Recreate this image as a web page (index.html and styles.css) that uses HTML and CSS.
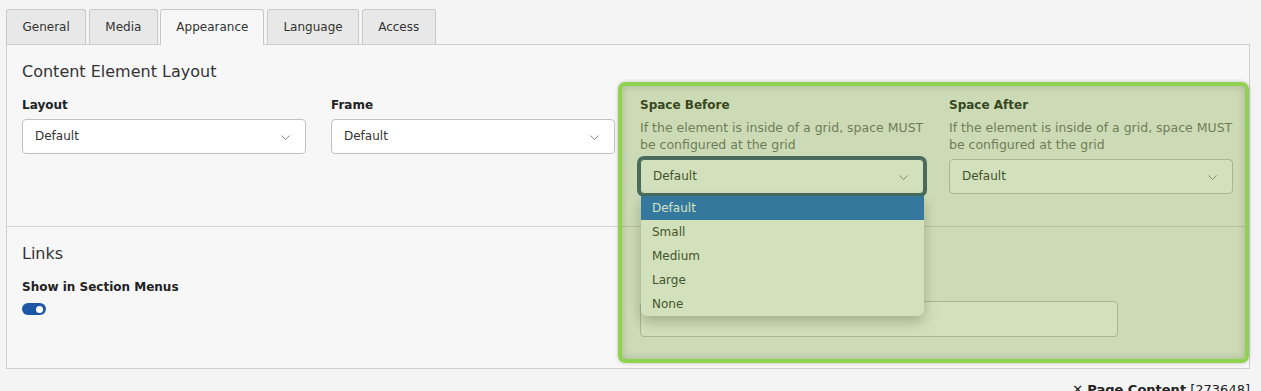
FILE: index.html
```html
<!DOCTYPE html>
<html lang="en">
<head>
    <meta charset="UTF-8">
    <title>Edit Page Content</title>
    <link rel="stylesheet" href="styles.css">
</head>
<body>
    <!-- Tabs -->
    <div class="tabs">
        <div class="tab">General</div>
        <div class="tab">Media</div>
        <div class="tab active">Appearance</div>
        <div class="tab">Language</div>
        <div class="tab">Access</div>
    </div>

    <div class="panel">
        <!-- Content Element Layout -->
        <div class="section">
            <div class="section-title">Content Element Layout</div>
            <div class="row">
                <div class="field">
                    <label>Layout</label>
                    <div class="select">Default
                        <svg class="chevron" width="9" height="5" viewBox="0 0 9 5"><polyline points="0.5,0.5 4.5,4.5 8.5,0.5" fill="none" stroke="#888" stroke-width="1"/></svg>
                    </div>
                </div>
                <div class="field">
                    <label>Frame</label>
                    <div class="select">Default
                        <svg class="chevron" width="9" height="5" viewBox="0 0 9 5"><polyline points="0.5,0.5 4.5,4.5 8.5,0.5" fill="none" stroke="#888" stroke-width="1"/></svg>
                    </div>
                </div>
                <div class="field">
                    <label>Space Before</label>
                    <p class="description">If the element is inside of a grid, space MUST be configured at the grid</p>
                    <div class="select focused">Default
                        <svg class="chevron" width="9" height="5" viewBox="0 0 9 5"><polyline points="0.5,0.5 4.5,4.5 8.5,0.5" fill="none" stroke="#888" stroke-width="1"/></svg>
                        <ul class="dropdown">
                            <li class="highlight">Default</li>
                            <li>Small</li>
                            <li>Medium</li>
                            <li>Large</li>
                            <li>None</li>
                        </ul>
                    </div>
                </div>
                <div class="field">
                    <label>Space After</label>
                    <p class="description">If the element is inside of a grid, space MUST be configured at the grid</p>
                    <div class="select">Default
                        <svg class="chevron" width="9" height="5" viewBox="0 0 9 5"><polyline points="0.5,0.5 4.5,4.5 8.5,0.5" fill="none" stroke="#888" stroke-width="1"/></svg>
                    </div>
                </div>
            </div>
        </div>

        <!-- Links -->
        <div class="section">
            <div class="section-title">Links</div>
            <div class="row">
                <div class="field wide">
                    <label>Show in Section Menus</label>
                    <div class="toggle"><span class="knob"></span></div>
                </div>
                <div class="field wide">
                    <label class="empty"></label>
                    <div class="input"></div>
                </div>
            </div>
        </div>
    </div>

    <div class="footer"><span class="close">✕</span> <strong>Page Content</strong> [273648]</div>

    <!-- highlight overlay -->
    <div class="highlight-box"></div>
</body>
</html>
```

FILE: styles.css
```css
/* General Styles */
* {
    margin: 0;
    padding: 0;
    box-sizing: border-box;
}
body {
    font-family: "DejaVu Sans", sans-serif;
    font-size: 12px;
    color: #333;
    background: #f4f4f4;
    padding: 9px 11px 0 6px;
    position: relative;
    height: 391px;
    overflow: hidden;
}

/* Tabs */
.tabs {
    display: flex;
    gap: 2.5px;
    position: relative;
    z-index: 1;
}
.tab {
    height: 35px;
    line-height: 34px;
    padding: 0 15.5px;
    background: #e8e8e8;
    border: 1px solid #c9c9c9;
    border-bottom: none;
    border-radius: 3px 3px 0 0;
    font-size: 12px;
    color: #333;
}
.tab.active {
    background: #f7f7f7;
    height: 36px;
    margin-bottom: -1px;
    padding: 0 15px;
}

/* Panel */
.panel {
    background: #f7f7f7;
    border: 1px solid #cfcfcf;
}
.section {
    padding: 17px 16px 31px 15px;
}
.section:first-child {
    padding-bottom: 32px;
}
.section + .section {
    border-top: 1px solid #d3d3d3;
}
.section-title {
    font-size: 16px;
    line-height: 20px;
    color: #333;
    margin-bottom: 15px;
}
.row {
    display: flex;
    gap: 25px;
}
.field {
    width: 284px;
}
.field.wide {
    width: 593px;
}
.field label {
    display: block;
    font-weight: bold;
    font-size: 12px;
    line-height: 16px;
    height: 16px;
    color: #222;
    margin-bottom: 6px;
}
.description {
    color: #707070;
    font-size: 12.5px;
    line-height: 17px;
    margin-top: 1px;
    margin-bottom: 6px;
}

/* Selects */
.select {
    position: relative;
    height: 35px;
    line-height: 33px;
    padding: 0 12px;
    background: #fff;
    border: 1px solid #c2c2c2;
    border-radius: 4px;
    font-size: 12px;
    color: #333;
}
.select .chevron {
    position: absolute;
    right: 15px;
    top: 15px;
}
.select.focused {
    border-color: #3b5577;
    box-shadow: 0 0 0 3px #3b5577;
}
.dropdown {
    position: absolute;
    left: 0;
    top: 36px;
    width: 283px;
    list-style: none;
    background: #fff;
    border-radius: 0 0 6px 6px;
    box-shadow: 0 6px 14px rgba(0, 0, 0, 0.28);
    overflow: hidden;
    z-index: 2;
}
.dropdown li {
    height: 24px;
    line-height: 24px;
    padding: 0 11px;
    color: #333;
}
.dropdown li.highlight {
    background: #1e6bd3;
    color: #fff;
}

/* Links */
.toggle {
    position: relative;
    width: 24px;
    height: 12px;
    margin-top: 8px;
    background: #1f57a6;
    border-radius: 6px;
}
.knob {
    position: absolute;
    right: 3px;
    top: 2.5px;
    width: 7px;
    height: 7px;
    border-radius: 50%;
    background: #fff;
}
.input {
    width: 478px;
    height: 36px;
    background: #fff;
    border: 1px solid #c2c2c2;
    border-radius: 4px;
}

/* Footer */
.footer {
    text-align: right;
    margin-top: 13px;
    font-size: 13px;
    color: #222;
}

/* Highlight overlay */
.highlight-box {
    position: absolute;
    left: 618px;
    top: 82px;
    width: 631px;
    height: 281px;
    border: 4px solid #8fd24e;
    border-radius: 7px;
    background: rgba(107, 157, 34, 0.3);
    box-shadow: inset 0 0 8px rgba(0, 0, 0, 0.18), 0 0 4px rgba(0, 0, 0, 0.2);
    z-index: 5;
}
```
